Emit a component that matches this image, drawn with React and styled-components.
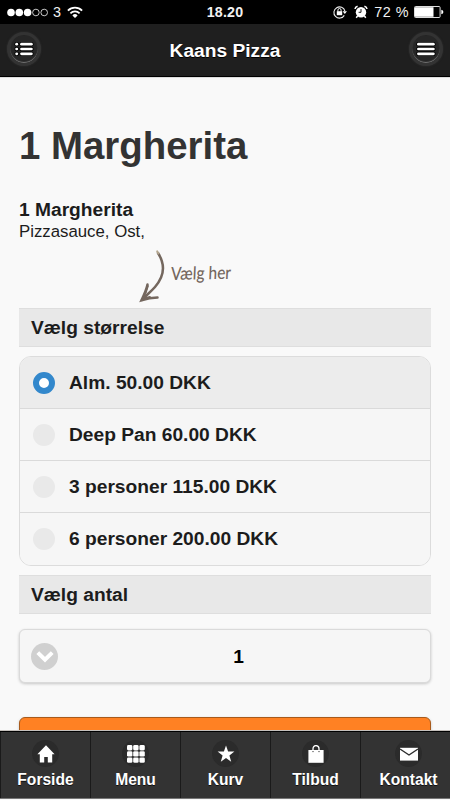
import React, { useState } from "react";
import styled, { createGlobalStyle } from "styled-components";

const SIZES = [
  "Alm. 50.00 DKK",
  "Deep Pan 60.00 DKK",
  "3 personer 115.00 DKK",
  "6 personer 200.00 DKK",
];

const HomeIcon = () => (
  <svg width="18" height="18" viewBox="0 0 18 18" fill="#fff">
    <path d="M9 0.3 L17.6 9.2 H15.2 V17.5 H10.8 V12 H7.2 V17.5 H2.8 V9.2 H0.4 Z" />
  </svg>
);

const GridIcon = () => (
  <svg width="18" height="18" viewBox="0 0 18 18" fill="#fff">
    {[0, 6.2, 12.4].map((y) =>
      [0, 6.2, 12.4].map((x) => (
        <rect key={`${x}-${y}`} x={x} y={y} width="5.4" height="5.4" rx="1.4" />
      ))
    )}
  </svg>
);

const StarIcon = () => (
  <svg width="18" height="18" viewBox="0 0 18 18" fill="#fff">
    <path d="M9 0.5 L11.1 6.6 H17.4 L12.4 10.5 L14.2 16.7 L9 13 L3.8 16.7 L5.6 10.5 L0.6 6.6 H6.9 Z" />
  </svg>
);

const BagIcon = () => (
  <svg width="18" height="18" viewBox="0 0 18 18">
    <path
      d="M6 6 V3.8 A3 3.2 0 0 1 12 3.8 V6"
      fill="none"
      stroke="#fff"
      strokeWidth="1.3"
    />
    <path d="M1.4 5 H16.6 V17.8 H1.4 Z" fill="#fff" />
    <circle cx="6" cy="6.6" r="0.7" fill="#333" />
    <circle cx="12" cy="6.6" r="0.7" fill="#333" />
  </svg>
);

const MailIcon = () => (
  <svg width="18" height="18" viewBox="0 0 18 18">
    <path d="M0 2.8 H18 V15.6 H0 Z" fill="#fff" />
    <path d="M0 4 L9 10 L18 4" fill="none" stroke="#2b2b2b" strokeWidth="1.4" />
  </svg>
);

const NAV = [
  { label: "Forside", Icon: HomeIcon },
  { label: "Menu", Icon: GridIcon },
  { label: "Kurv", Icon: StarIcon },
  { label: "Tilbud", Icon: BagIcon },
  { label: "Kontakt", Icon: MailIcon },
];

const SignalDots = () => (
  <svg width="45" height="24" viewBox="0 0 45 24">
    {[4, 12.3, 20.6].map((x) => (
      <circle key={x} cx={x} cy="12.5" r="3.8" fill="#fff" />
    ))}
    {[28.9, 37.2].map((x) => (
      <circle key={x} cx={x} cy="12.5" r="3.3" fill="none" stroke="#ddd" strokeWidth="0.9" />
    ))}
  </svg>
);

const WifiIcon = () => (
  <svg width="16" height="13" viewBox="0 0 16 13">
    <path d="M0.9 4.6 A10 10 0 0 1 15.1 4.6" fill="none" stroke="#fff" strokeWidth="1.8" />
    <path d="M3.4 7.3 A6.4 6.4 0 0 1 12.6 7.3" fill="none" stroke="#fff" strokeWidth="1.7" />
    <path d="M5.4 9.4 A3.7 3.7 0 0 1 10.6 9.4 L8 12 Z" fill="#fff" />
  </svg>
);

const LockIcon = () => (
  <svg width="14" height="14" viewBox="0 0 14 14">
    <path d="M11.3 10.4 A5.6 5.6 0 1 1 11.9 6" fill="none" stroke="#eee" strokeWidth="1.1" />
    <path d="M9.6 6.2 H14 L11.8 9 Z" fill="#fff" />
    <path d="M4.9 6.5 V5.1 A1.6 1.6 0 0 1 8.1 5.1 V6.5" fill="none" stroke="#fff" strokeWidth="1" />
    <rect x="3.8" y="6.2" width="5.4" height="4" fill="#fff" />
  </svg>
);

const AlarmIcon = () => (
  <svg width="14" height="14" viewBox="0 0 14 14">
    <circle cx="7" cy="7.2" r="5.2" fill="#fff" />
    <path
      d="M1 4 Q1.2 2 3.6 1.2 M13 4 Q12.8 2 10.4 1.2 M3.6 11 L2.2 12.8 M10.4 11 L11.8 12.8"
      fill="none"
      stroke="#fff"
      strokeWidth="1.5"
    />
    <path d="M7 4 V7.3 H4.6" fill="none" stroke="#000" strokeWidth="0.9" />
  </svg>
);

const BatteryIcon = () => (
  <svg width="30" height="12" viewBox="0 0 30 12">
    <rect x="0.5" y="0.5" width="25.6" height="11" rx="1" fill="none" stroke="#ddd" />
    <rect x="1" y="1.2" width="18.5" height="9.6" fill="#fff" />
    <path d="M27.3 3.8 Q29.4 4 29.4 6 Q29.4 8 27.3 8.2 Z" fill="#fff" />
  </svg>
);

const MenuLines = ({ bullets }) => (
  <svg width="20" height="16" viewBox="0 0 20 16">
    {[3.2, 8, 12.8].map((y) => (
      <g key={y} stroke="#000" strokeWidth="4.4" strokeLinecap="round">
        {bullets && <path d={`M2.6 ${y} H2.8`} />}
        <path d={`M${bullets ? 7.5 : 2.4} ${y} H17.4`} />
      </g>
    ))}
    {[3.2, 8, 12.8].map((y) => (
      <g key={y} stroke="#fff" strokeWidth="2.7" strokeLinecap="round">
        {bullets && <path d={`M2.6 ${y} H2.8`} />}
        <path d={`M${bullets ? 7.5 : 2.4} ${y} H17.4`} />
      </g>
    ))}
  </svg>
);

const ArrowDrawing = () => (
  <svg width="28" height="54" viewBox="0 0 28 54" fill="none" stroke="#74675e" strokeLinecap="round">
    <path d="M19 4 C26 15 26.5 26 16 38 C12 42.5 7 46.5 3 51" strokeWidth="2.5" />
    <path d="M18.2 2.4 L19.4 4.4" stroke="#b5a78f" strokeWidth="2" />
    <path d="M8.5 35.5 C7.6 40 5 46 2.5 51.2 C8 49.6 13 48.8 18.5 48.6" strokeWidth="2.5" />
    <path d="M9 37 C8 41 6 46 4 49.6 L11 47.8" strokeWidth="1.6" />
  </svg>
);

const App = () => {
  const [selected, setSelected] = useState(0);

  return (
    <Page>
      <GlobalStyle />
      <StatusBar>
        <StatusLeft>
          <SignalDots />
          <Carrier>3</Carrier>
          <WifiIcon />
        </StatusLeft>
        <Clock>18.20</Clock>
        <StatusRight>
          <LockIcon />
          <AlarmIcon />
          <Percent>72 %</Percent>
          <BatteryIcon />
        </StatusRight>
      </StatusBar>

      <Header>
        <RoundButton>
          <MenuLines bullets />
        </RoundButton>
        <HeaderTitle>Kaans Pizza</HeaderTitle>
        <RoundButton>
          <MenuLines />
        </RoundButton>
      </Header>

      <Content>
        <Title>1 Margherita</Title>
        <ProductName>1 Margherita</ProductName>
        <Ingredients>Pizzasauce, Ost,</Ingredients>

        <Hint>
          <ArrowDrawing />
          <HintText>Vælg her</HintText>
        </Hint>

        <Divider>Vælg størrelse</Divider>
        <RadioGroup>
          {SIZES.map((size, i) => (
            <RadioRow key={size} $active={i === selected} onClick={() => setSelected(i)}>
              <RadioDot $active={i === selected} />
              {size}
            </RadioRow>
          ))}
        </RadioGroup>

        <Divider>Vælg antal</Divider>
        <Select>
          <SelectIcon>
            <svg width="18" height="12" viewBox="0 0 18 12" fill="none" stroke="#fff" strokeWidth="4">
              <path d="M1.8 1.6 L9 8.6 L16.2 1.6" />
            </svg>
          </SelectIcon>
          <SelectValue>1</SelectValue>
        </Select>
        <OrderButton />
      </Content>

      <Footer>
        {NAV.map(({ label, Icon }) => (
          <NavItem key={label}>
            <NavIcon>
              <Icon />
            </NavIcon>
            {label}
          </NavItem>
        ))}
      </Footer>
    </Page>
  );
};

const GlobalStyle = createGlobalStyle`
  * {
    box-sizing: border-box;
  }

  body {
    margin: 0;
    overflow: hidden;
    background: #f9f9f9;
  }

  svg {
    display: block;
    flex: none;
  }
`;

const Page = styled.div`
  display: flex;
  flex-direction: column;
  width: 450px;
  height: 800px;
  overflow: hidden;
  background: #f9f9f9;
  color: #1c1c1c;
  font-family: "Liberation Sans", Arial, sans-serif;
  font-size: 19.2px;
`;

const StatusBar = styled.div`
  display: grid;
  grid-template-columns: 1fr auto 1fr;
  flex: none;
  align-items: center;
  height: 24px;
  padding: 0 6px 0 7px;
  background: #000;
  color: #f2f2f2;
  font-size: 14.4px;
`;

const StatusLeft = styled.div`
  display: flex;
  align-items: center;
`;

const Carrier = styled.span`
  width: 15px;
  padding: 1px 0 0 1px;
  line-height: 23px;
`;

const Clock = styled.span`
  margin-right: 1px;
  font-size: 14.2px;
  font-weight: 700;
  letter-spacing: 0.2px;
`;

const StatusRight = styled.div`
  display: flex;
  justify-content: flex-end;
  align-items: center;

  svg + svg {
    margin-left: 7px;
  }
`;

const Percent = styled.span`
  margin: 0 5px 0 6px;
  letter-spacing: 0.5px;
  white-space: nowrap;
`;

const Header = styled.header`
  display: flex;
  flex: none;
  justify-content: space-between;
  align-items: center;
  height: 53px;
  padding: 0 7px 2px;
  background: #1f1f1f;
  border-bottom: 1px solid #000;
  box-shadow: 0 1px 0 #ddd;
`;

const HeaderTitle = styled.div`
  padding-top: 4px;
  color: #fff;
  font-weight: 700;
  text-shadow: 0 1px 0 #000;
`;

const RoundButton = styled.button`
  display: flex;
  justify-content: center;
  align-items: center;
  width: 34px;
  height: 34px;
  padding: 0;
  border: 3px solid #333;
  border-radius: 50%;
  background: #262626;
  box-shadow: inset 0 -1px 1px #777, 0 0 2px #333;
`;

const Content = styled.main`
  display: flex;
  flex: 1;
  flex-direction: column;
  min-height: 0;
  padding: 0 19px;
  overflow: hidden;
`;

const Title = styled.h1`
  flex: none;
  height: 46px;
  margin: 46px 0 0;
  color: #333;
  font-size: 38.4px;
  line-height: 46px;
`;

const ProductName = styled.div`
  flex: none;
  height: 22px;
  margin-top: 30px;
  font-weight: 700;
  line-height: 22px;
`;

const Ingredients = styled.div`
  flex: none;
  height: 21px;
  font-size: 16.8px;
  line-height: 22px;
`;

const Hint = styled.div`
  display: flex;
  flex: none;
  height: 66px;
  padding: 7px 0 0 120px;
`;

const HintText = styled.span`
  height: 24px;
  margin: 12px 0 0 4px;
  color: #74675e;
  font-family: Lato, sans-serif;
  font-size: 18px;
  font-weight: 500;
  line-height: 24px;
  white-space: nowrap;
  transform: scaleX(0.86) rotate(-1deg) skewX(-4deg);
  transform-origin: left center;
`;

const Divider = styled.div`
  flex: none;
  height: 39px;
  padding: 0 12px;
  border: solid #dedede;
  border-width: 1px 0;
  background: #e8e8e8;
  font-weight: 700;
  line-height: 38px;
`;

const RadioGroup = styled.div`
  flex: none;
  height: 210px;
  margin: 9px 0;
  overflow: hidden;
  border: 1px solid #dcdcdc;
  border-radius: 12px;
`;

const RadioRow = styled.div`
  display: flex;
  align-items: center;
  height: 52px;
  padding: 1px 13px 0;
  background: ${({ $active }) => ($active ? "#ececec" : "#f6f6f6")};
  border-bottom: 1px solid #dadada;
  font-weight: 700;

  &:last-child {
    border-bottom-color: transparent;
  }
`;

const RadioDot = styled.span`
  flex: none;
  width: 22px;
  height: 22px;
  margin-right: 14px;
  border: 6px solid ${({ $active }) => ($active ? "#3388cc" : "#e9e9e9")};
  border-radius: 50%;
  background: ${({ $active }) => ($active ? "#fff" : "#e9e9e9")};
`;

const Select = styled.div`
  display: flex;
  flex: none;
  align-items: center;
  height: 54px;
  margin-top: 15px;
  padding: 0 11px;
  border: 1px solid #dadada;
  border-radius: 6px;
  background: #f6f6f6;
  box-shadow: 0 1px 3px rgba(0, 0, 0, 0.2);
`;

const SelectIcon = styled.span`
  display: flex;
  justify-content: center;
  align-items: center;
  width: 27px;
  height: 27px;
  padding-top: 2px;
  border-radius: 50%;
  background: #d0d0d0;
`;

const SelectValue = styled.span`
  flex: 1;
  padding-top: 1px;
  color: #000;
  font-weight: 700;
  text-align: center;
`;

const OrderButton = styled.button`
  flex: none;
  height: 54px;
  margin-top: 34px;
  border: 1px solid #a85a1b;
  border-radius: 6px;
  background: #ff8123;
  box-shadow: 0 1px 3px rgba(0, 0, 0, 0.2);
`;

const Footer = styled.footer`
  display: flex;
  flex: none;
  width: 456px;
  height: 68px;
  margin-bottom: 1px;
  border-top: 1px solid #000;
  border-bottom: 1px solid #777;
  background: #333;
  box-shadow: 0 -1px 0 #c5c0bc;
`;

const NavItem = styled.a`
  display: flex;
  flex-direction: column;
  align-items: center;
  width: 90px;
  padding-top: 8px;
  border-left: 1px solid #1a1a1a;
  color: #fff;
  font-size: 15.6px;
  font-weight: 700;
  line-height: 25px;
  text-shadow: 0 1px 0 #111;

  &:last-child {
    width: 96px;
  }
`;

const NavIcon = styled.span`
  display: flex;
  justify-content: center;
  align-items: center;
  width: 27px;
  height: 27px;
  border-radius: 50%;
  background: #2b2b2b;
`;

export default App;
